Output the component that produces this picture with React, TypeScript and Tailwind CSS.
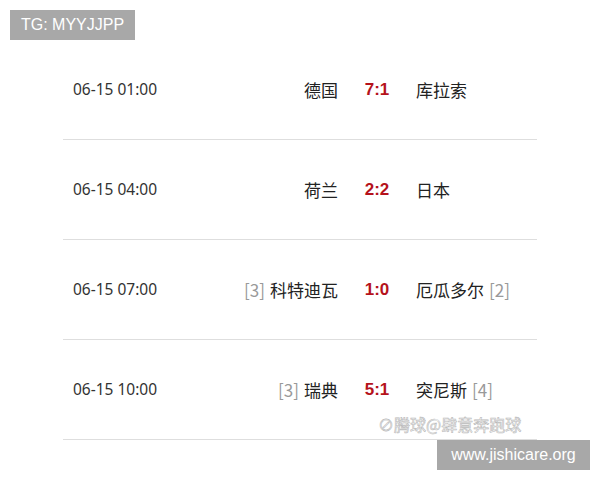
const matches = [
  { time: "06-15 01:00", home: "德国", homeRank: "", score: "7:1", away: "库拉索", awayRank: "" },
  { time: "06-15 04:00", home: "荷兰", homeRank: "", score: "2:2", away: "日本", awayRank: "" },
  { time: "06-15 07:00", home: "科特迪瓦", homeRank: "[3]", score: "1:0", away: "厄瓜多尔", awayRank: "[2]" },
  { time: "06-15 10:00", home: "瑞典", homeRank: "[3]", score: "5:1", away: "突尼斯", awayRank: "[4]" },
];

export default function App() {
  return (
    <div
      className="relative w-[600px] h-[480px] bg-white overflow-hidden"
      style={{ fontFamily: '"Noto Sans CJK SC", "Liberation Sans", sans-serif' }}
    >
      <div className="absolute top-[10px] left-[10px] h-[30px] w-[125px] flex items-center justify-center bg-[#a8a8a8] text-white text-[16px] font-['Liberation_Sans',sans-serif]">
        TG: MYYJJPP
      </div>

      <div className="pt-[40px] ml-[63px] w-[474px]">
        {matches.map((m) => (
          <div
            key={m.time}
            className="h-[100px] flex items-center border-b border-[#dedede] text-[#222]"
          >
            <div className="w-[150px] pl-[10px] text-[15.5px] text-[#333] font-['Noto_Sans',sans-serif]">
              {m.time}
            </div>
            <div className="w-[125px] text-right text-[17px] leading-none whitespace-nowrap">
              {m.homeRank && <span className="text-[#999] mr-[5px]">{m.homeRank}</span>}
              {m.home}
            </div>
            <div className="w-[78px] text-center text-[17px] font-bold text-[#b5121b] font-['Liberation_Sans',sans-serif]">
              {m.score}
            </div>
            <div className="text-[17px] leading-none whitespace-nowrap">
              {m.away}
              {m.awayRank && <span className="text-[#999] ml-[5px]">{m.awayRank}</span>}
            </div>
          </div>
        ))}
      </div>

      <div className="absolute left-[378px] top-[412px] text-[16px] text-white [-webkit-text-stroke:0.6px_#b8b8b8]">
        ⊘腾球@肆意奔跑球
      </div>

      <div className="absolute left-[437px] top-[440px] h-[30px] w-[153px] flex items-center justify-center bg-[#a8a8a8] text-white text-[16px] font-['Liberation_Sans',sans-serif]">
        www.jishicare.org
      </div>
    </div>
  );
}
